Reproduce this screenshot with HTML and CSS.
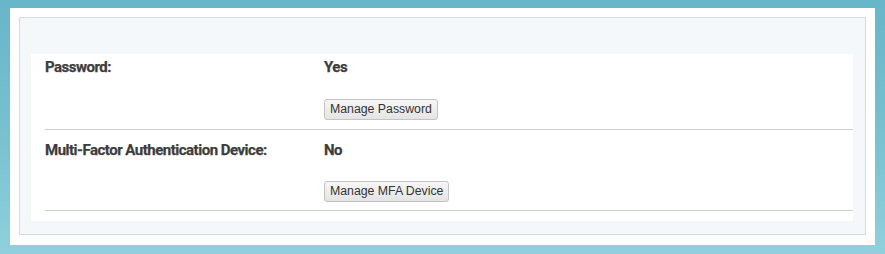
FILE: index.html
```html
<!DOCTYPE html>
<html>
<head>
<meta charset="utf-8">
<link rel="stylesheet" href="styles.css">
</head>
<body>
<div class="frame">
  <div class="panel">
    <div class="content">
      <div class="row first">
        <div class="label">Password:</div>
        <div class="value">
          <div class="status">Yes</div>
          <button class="btn">Manage Password</button>
        </div>
      </div>
      <div class="row second">
        <div class="label">Multi-Factor Authentication Device:</div>
        <div class="value">
          <div class="status">No</div>
          <button class="btn">Manage MFA Device</button>
        </div>
      </div>
    </div>
  </div>
</div>
</body>
</html>
```

FILE: styles.css
```css
html, body {
  margin: 0;
  padding: 0;
}
body {
  width: 885px;
  height: 254px;
  box-sizing: border-box;
  padding: 8px 10px 9px 10px;
  background: linear-gradient(180deg, #68b6c9 0%, #76c0d0 50%, #90d0dc 100%);
}
.frame {
  background: #fff;
  height: 237px;
  box-sizing: border-box;
  padding: 9px 9px 10px 9px;
}
.panel {
  background: #f5f8fa;
  border: 1px solid #d8dcdc;
  height: 218px;
  box-sizing: border-box;
  padding: 36px 12px 0 11px;
}
.content {
  background: #fff;
  height: 167px;
  padding: 0 0 0 14px;
}
.row {
  display: flex;
  border-bottom: 1px solid #cccccc;
  height: 81px;
  box-sizing: border-box;
  padding-top: 10px;
}
.row.first {
  height: 76px;
  padding-top: 3px;
}
.label,
.status {
  font-family: Roboto, sans-serif;
  font-weight: 700;
  font-size: 15px;
  letter-spacing: -0.5px;
  color: #3d3d3d;
  -webkit-text-stroke: 0.25px #3d3d3d;
  line-height: 20px;
}
.label {
  width: 279px;
}
.status {
  margin-bottom: 22px;
}
.row.second .status {
  margin-bottom: 21px;
}
.btn {
  display: block;
  font-family: "Liberation Sans", Arial, sans-serif;
  font-size: 12.3px;
  color: #333;
  height: 21px;
  padding: 0 5px;
  border: 1px solid #c4c4c4;
  border-radius: 3px;
  background: linear-gradient(180deg, #f6f6f6 0%, #e4e4e4 100%);
  line-height: 19px;
}
```
